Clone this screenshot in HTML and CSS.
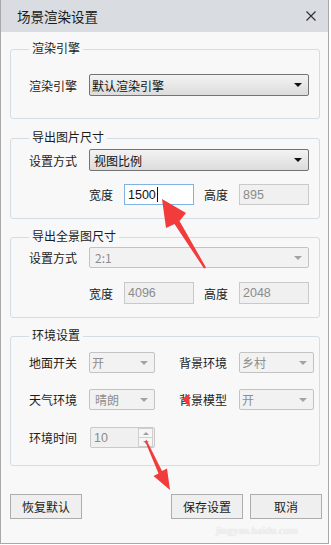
FILE: index.html
```
<!DOCTYPE html>
<html lang="zh-CN">

<head>
    <meta charset="UTF-8">
    <meta name="viewport" content="width=device-width, initial-scale=1.0">
    <title>场景渲染设置</title>
    <link rel="stylesheet" href="styles.css">
</head>

<body>

    <div class="window">
        <div class="titlebar">
            <span class="title">场景渲染设置</span>
            <svg class="close" width="10" height="10" viewBox="0 0 10 10">
                <path d="M0.5 0.5 L9.5 9.5 M9.5 0.5 L0.5 9.5" stroke="#333" stroke-width="1.2" fill="none" />
            </svg>
        </div>

        <div class="content">
            <!-- render engine -->
            <div class="group g1">
                <div class="legend">渲染引擎</div>
                <div class="row">
                    <span class="label">渲染引擎</span>
                    <div class="combo wide active tight"><span>默认渲染引擎</span><i class="arrow"></i></div>
                </div>
            </div>

            <!-- picture size -->
            <div class="group g2">
                <div class="legend">导出图片尺寸</div>
                <div class="row">
                    <span class="label">设置方式</span>
                    <div class="combo wide active shift"><span>视图比例</span><i class="arrow"></i></div>
                </div>
                <div class="row size-row">
                    <span class="label short">宽度</span>
                    <div class="field focus">1500<i class="caret"></i></div>
                    <span class="label short gap">高度</span>
                    <div class="field off">895</div>
                </div>
            </div>

            <!-- panorama size -->
            <div class="group g3">
                <div class="legend">导出全景图尺寸</div>
                <div class="row">
                    <span class="label">设置方式</span>
                    <div class="combo wide"><span>2:1</span><i class="arrow"></i></div>
                </div>
                <div class="row size-row">
                    <span class="label short">宽度</span>
                    <div class="field off tall">4096</div>
                    <span class="label short gap">高度</span>
                    <div class="field off tall">2048</div>
                </div>
            </div>

            <!-- environment -->
            <div class="group g4">
                <div class="legend">环境设置</div>
                <div class="row env1">
                    <span class="label">地面开关</span>
                    <div class="combo small tight"><span>开</span><i class="arrow"></i></div>
                    <span class="label right-label">背景环境</span>
                    <div class="combo mid tight"><span>乡村</span><i class="arrow"></i></div>
                </div>
                <div class="row env2">
                    <span class="label">天气环境</span>
                    <div class="combo small"><span>晴朗</span><i class="arrow"></i></div>
                    <span class="label right-label">背景模型</span>
                    <div class="combo mid tight"><span>开</span><i class="arrow"></i></div>
                </div>
                <div class="row env3">
                    <span class="label">环境时间</span>
                    <div class="spin">
                        <span>10</span>
                        <div class="spin-btns">
                            <div class="spin-btn"><i class="tri up"></i></div>
                            <div class="spin-btn"><i class="tri down"></i></div>
                        </div>
                    </div>
                </div>
            </div>

            <div class="buttons">
                <button class="btn">恢复默认</button>
                <div class="btn-right">
                    <button class="btn">保存设置</button>
                    <button class="btn">取消</button>
                </div>
            </div>
        </div>
    </div>

    <div class="watermark">jingyan.baidu.com</div>

    <svg class="marks" width="331" height="545" viewBox="0 0 331 545">
        <polygon fill="#f23b3b"
            points="162,199 186,213 179.5,221 206,267.5 204,268.5 174.5,224 166,228" />
        <polygon fill="#f23b3b"
            points="170,490 167,468.5 162,471 146.5,440 145,441 158.5,473.5 153.5,476" />
        <polygon fill="#f23b3b" points="182,399 189,394 190,407" />
    </svg>

</body>

</html>
```

FILE: styles.css
```
body {
    margin: 0;
    background-color: #ffffff;
    font-family: "Noto Sans CJK SC", "Liberation Sans", sans-serif;
    font-size: 12px;
    color: #1b1b1b;
}

.window {
    width: 329px;
    height: 544px;
    box-sizing: border-box;
    border-left: 1px solid #a9a9a9;
    border-right: 1px solid #a9a9a9;
    border-bottom: 1px solid #a9a9a9;
    background-color: #f8f8f8;
}

.titlebar {
    height: 32px;
    background-color: #d9dce1;
    display: flex;
    align-items: center;
    justify-content: space-between;
    padding: 0 12px 0 16px;
}

.title {
    font-size: 13.5px;
    color: #1a1a1a;
}

.close {
    display: block;
}

.content {
    padding: 17px 0 0 9px;
}

.group {
    width: 310px;
    box-sizing: border-box;
    border: 1px solid #d3dde5;
    border-radius: 3px;
}

.legend {
    width: fit-content;
    margin: -10px 0 0 18px;
    padding: 0 3px;
    line-height: 16px;
    background-color: #f8f8f8;
}

.g1 {
    padding-bottom: 22px;
}

.g1 .row {
    margin-top: 18px;
}

.g2 {
    margin-top: 19px;
    padding-bottom: 13px;
}

.g2 .row {
    margin-top: 4px;
}

.g2 .size-row {
    margin-top: 13px;
}

.g3 {
    margin-top: 18px;
    padding-bottom: 13px;
}

.g3 .row {
    margin-top: 3px;
}

.g3 .size-row {
    margin-top: 14px;
}

.g4 {
    margin-top: 18px;
    padding-bottom: 17px;
}

.env1 {
    margin-top: 9px;
}

.env2 {
    margin-top: 16px;
}

.env3 {
    margin-top: 17px;
}

.row {
    display: flex;
    align-items: center;
    padding-left: 18px;
}

.label {
    width: 60px;
    flex-shrink: 0;
}

.size-row {
    padding-left: 78px;
}

.label.short {
    width: 35px;
}

.label.gap {
    margin-left: 10px;
}

.right-label {
    margin-left: 24px;
}

/* combo boxes */
.combo {
    position: relative;
    box-sizing: border-box;
    height: 21px;
    display: flex;
    align-items: center;
    padding-left: 5px;
    border: 1px solid #c3c3c3;
    border-radius: 2px;
    background-color: #f2f2f2;
    color: #8e8e8e;
}

.combo.active {
    height: 22px;
    border-color: #737373;
    background: linear-gradient(#f3f3f3, #dcdcdc);
    color: #111111;
}

.combo.tight {
    padding-left: 2px;
}

.combo.shift {
    padding-left: 4px;
}

.combo.wide {
    width: 220px;
}

.combo.small {
    width: 66px;
}

.combo.mid {
    width: 75px;
}

.arrow {
    position: absolute;
    right: 6px;
    top: 50%;
    margin-top: -2px;
    border-left: 4px solid transparent;
    border-right: 4px solid transparent;
    border-top: 4px solid #a3a3a3;
}

.combo.active .arrow {
    border-top-color: #111111;
}

/* text fields */
.field {
    box-sizing: border-box;
    width: 70px;
    height: 21px;
    padding-left: 3px;
    display: flex;
    align-items: center;
    font-family: "Liberation Sans", sans-serif;
    font-size: 12.5px;
    border: 1px solid #c9c9c9;
    background-color: #f0f0f0;
    color: #8b8b8b;
}

.field.tall {
    height: 22px;
}

.field.focus {
    border-color: #80b3e4;
    background-color: #ffffff;
    color: #111111;
}

.caret {
    width: 1px;
    height: 15px;
    margin-left: 1px;
    background-color: #111111;
}

/* spin box */
.spin {
    box-sizing: border-box;
    width: 65px;
    height: 21px;
    margin-left: 1px;
    display: flex;
    align-items: center;
    justify-content: space-between;
    padding-left: 3px;
    border: 1px solid #c9c9c9;
    border-radius: 2px;
    background-color: #f0f0f0;
    color: #8b8b8b;
    font-family: "Liberation Sans", sans-serif;
    font-size: 12.5px;
}

.spin-btns {
    display: flex;
    flex-direction: column;
    margin-right: 1px;
}

.spin-btn {
    width: 13px;
    height: 8px;
    border: 1px solid #cfcfcf;
    display: flex;
    align-items: center;
    justify-content: center;
    background-color: #f6f6f6;
}

.spin-btn + .spin-btn {
    border-top: none;
}

.tri {
    border-left: 3px solid transparent;
    border-right: 3px solid transparent;
}

.tri.up {
    border-bottom: 3px solid #a0a0a0;
}

.tri.down {
    border-top: 3px solid #a0a0a0;
}

/* bottom buttons */
.buttons {
    display: flex;
    justify-content: space-between;
    width: 312px;
    margin-top: 28px;
}

.btn-right {
    display: flex;
    gap: 7px;
}

.btn {
    width: 72px;
    height: 25px;
    padding: 0;
    font-family: "Noto Sans CJK SC", sans-serif;
    font-size: 12px;
    color: #1b1b1b;
    background-color: #efefef;
    border: 1px solid #adadad;
}

.watermark {
    position: absolute;
    left: 216px;
    top: 524px;
    font-family: "Liberation Serif", serif;
    font-size: 11px;
    color: #f4f4f4;
    text-shadow: 0 0 1px #c8c8c8;
}

.marks {
    position: absolute;
    left: 0;
    top: 0;
    pointer-events: none;
}
```
